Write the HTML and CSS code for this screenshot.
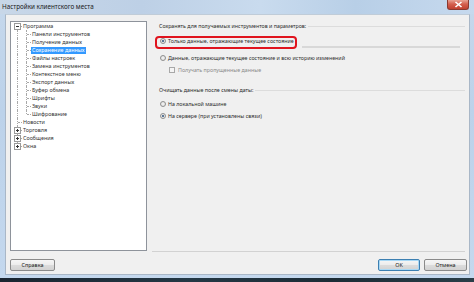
FILE: index.html
```html
<!DOCTYPE html>
<html lang="ru">
<head>
<meta charset="utf-8">
<title>Настройки клиентского места</title>
<link rel="stylesheet" href="styles.css">
</head>
<body>
<div class="window">
  <div class="titlebar">
    <span class="title">Настройки клиентского места</span>
    <span class="close"><svg width="9" height="7" viewBox="0 0 9 7"><path d="M1.5 1 L7.5 6 M7.5 1 L1.5 6" stroke="#fff" stroke-width="1.6"/></svg></span>
  </div>
  <div class="client">
    <div class="main">
      <div class="tree">
        <div class="row"><span class="g first"><svg class="box" width="7" height="7" viewBox="0 0 7 7"><rect x="0.5" y="0.5" width="6" height="6" fill="#fff" stroke="#9a9a9a"/><path d="M2 3.5h3" stroke="#333"/></svg></span><span class="lbl">Программа</span></div>
        <div class="row"><span class="g v"></span><span class="g t"></span><span class="lbl">Панели инструментов</span></div>
        <div class="row"><span class="g v"></span><span class="g t"></span><span class="lbl">Получение данных</span></div>
        <div class="row"><span class="g v"></span><span class="g t"></span><span class="lbl sel">Сохранение данных</span></div>
        <div class="row"><span class="g v"></span><span class="g t"></span><span class="lbl">Файлы настроек</span></div>
        <div class="row"><span class="g v"></span><span class="g t"></span><span class="lbl">Замена инструментов</span></div>
        <div class="row"><span class="g v"></span><span class="g t"></span><span class="lbl">Контекстное меню</span></div>
        <div class="row"><span class="g v"></span><span class="g t"></span><span class="lbl">Экспорт данных</span></div>
        <div class="row"><span class="g v"></span><span class="g t"></span><span class="lbl">Буфер обмена</span></div>
        <div class="row"><span class="g v"></span><span class="g t"></span><span class="lbl">Шрифты</span></div>
        <div class="row"><span class="g v"></span><span class="g t"></span><span class="lbl">Звуки</span></div>
        <div class="row"><span class="g v"></span><span class="g l"></span><span class="lbl">Шифрование</span></div>
        <div class="row"><span class="g t"></span><span class="lbl">Новости</span></div>
        <div class="row"><span class="g t"><svg class="box" width="7" height="7" viewBox="0 0 7 7"><rect x="0.5" y="0.5" width="6" height="6" fill="#fff" stroke="#9a9a9a"/><path d="M2 3.5h3M3.5 2v3" stroke="#333"/></svg></span><span class="lbl">Торговля</span></div>
        <div class="row"><span class="g t"><svg class="box" width="7" height="7" viewBox="0 0 7 7"><rect x="0.5" y="0.5" width="6" height="6" fill="#fff" stroke="#9a9a9a"/><path d="M2 3.5h3M3.5 2v3" stroke="#333"/></svg></span><span class="lbl">Сообщения</span></div>
        <div class="row"><span class="g l"><svg class="box" width="7" height="7" viewBox="0 0 7 7"><rect x="0.5" y="0.5" width="6" height="6" fill="#fff" stroke="#9a9a9a"/><path d="M2 3.5h3M3.5 2v3" stroke="#333"/></svg></span><span class="lbl">Окна</span></div>
      </div>
      <div class="panel">
        <div class="hdr h1"><span>Сохранять для получаемых инструментов и параметров:</span><span class="rule"></span></div>
        <div class="opt o1"><span class="radio on"></span><span>Только данные, отражающие текущее состояние</span><span class="trail"></span><span class="mark"></span></div>
        <div class="opt o2"><span class="radio"></span><span>Данные, отражающие текущее состояние и всю историю изменений</span></div>
        <div class="opt o3"><span class="check"></span><span class="dim">Получать пропущенные данные</span></div>
        <div class="hdr h2"><span>Очищать данные после смены даты:</span><span class="rule"></span></div>
        <div class="opt o4"><span class="radio"></span><span>На локальной машине</span></div>
        <div class="opt o5"><span class="radio on"></span><span>На сервере (при установлены связи)</span></div>
      </div>
    </div>
    <div class="buttons">
      <button class="btn help">Справка</button>
      <span class="spacer"></span>
      <button class="btn ok">OK</button>
      <button class="btn cancel">Отмена</button>
    </div>
  </div>
</div>
<div class="taskbar"></div>
</body>
</html>
```

FILE: styles.css
```css
* { box-sizing: border-box; }
html, body { margin: 0; padding: 0; }
body {
  width: 474px;
  height: 282px;
  overflow: hidden;
  background: #1c2a35;
  font-family: "Noto Sans", "Open Sans", sans-serif;
  font-size: 5.4px;
  color: #2e2e2e;
}
.window {
  height: 278px;
  background: linear-gradient(180deg, #c6d8ec 0%, #bcd2ea 40%, #c4d8ee 100%);
  padding: 0 4px 3px 5px;
  display: flex;
  flex-direction: column;
}
.titlebar {
  height: 14px;
  display: flex;
  align-items: flex-start;
  margin-left: -5px;
  margin-right: -4px;
  padding-left: 2px;
  background: linear-gradient(90deg, #c8d7e8 0%, #bdd0e6 30%, #c9dbee 55%, #b8cfe7 75%, #c6d9ee 100%);
}
.title {
  font-size: 6.3px;
  line-height: 13px;
  color: #1a1a1a;
}
.close {
  margin-left: auto;
  margin-right: 5px;
  width: 22px;
  height: 10px;
  border-radius: 0 0 3px 3px;
  background: linear-gradient(180deg, #e8a394 0%, #d4604f 45%, #c1402f 100%);
  border: 1px solid #8a3a30;
  border-top: none;
  display: flex;
  align-items: center;
  justify-content: center;
}
.client {
  flex: 1;
  background: #f0f0f0;
  border: 1px solid #a9b7c7;
  border-top-color: #c0ccd8;
  padding: 6px 2px 3px 4px;
  display: flex;
  flex-direction: column;
}
.main {
  height: 231px;
  display: flex;
  margin-right: 2px;
}
.tree {
  width: 137px;
  height: 230px;
  background: #fff;
  border: 1px solid #8e939b;
  padding: 0 0 0 2px;
}
.row {
  height: 8px;
  display: flex;
  align-items: center;
  white-space: nowrap;
}
.g {
  flex: none;
  width: 9px;
  height: 8px;
  position: relative;
}
.g::before, .g::after {
  content: "";
  position: absolute;
}
.g.v::before, .g.t::before {
  left: 4px; top: 0; bottom: 0;
  border-left: 1px dotted #a8a8a8;
}
.g.l::before {
  left: 4px; top: 0; height: 4px;
  border-left: 1px dotted #a8a8a8;
}
.g.first::before {
  left: 4px; top: 4px; bottom: 0;
  border-left: 1px dotted #a8a8a8;
}
.g.t::after, .g.l::after, .g.first::after {
  left: 5px; right: 0; top: 4px;
  border-top: 1px dotted #a8a8a8;
}
.box {
  position: absolute;
  left: 1px;
  top: 1px;
  z-index: 1;
}
.lbl {
  padding: 0 1px;
  line-height: 7px;
  color: #333;
}
.lbl.sel {
  background: #3399ff;
  color: #fff;
}
.panel {
  flex: 1;
  margin-left: 5px;
  border-bottom: 1px solid #d2d2d2;
  padding: 1px 0 0 7px;
  display: flex;
  flex-direction: column;
  white-space: nowrap;
  font-size: 5.3px;
}
.hdr {
  height: 8px;
  display: flex;
  align-items: center;
  color: #2a2a2a;
}
.rule {
  flex: 1;
  margin-left: 2px;
  border-top: 1px solid #dcdcdc;
}
.opt {
  height: 8px;
  display: flex;
  align-items: center;
  gap: 2px;
  position: relative;
}
.h1 { margin-bottom: 7px; }
.o1 { margin-bottom: 9px; margin-left: 1px; }
.o2 { margin-bottom: 4px; margin-left: 1px; }
.o3 { margin-bottom: 12px; margin-left: 10px; }
.h2 { margin-bottom: 6px; }
.o4 { margin-bottom: 4px; margin-left: 1px; }
.o5 { margin-left: 1px; }
.radio {
  flex: none;
  width: 6px;
  height: 6px;
  border-radius: 50%;
  border: 1px solid #8f8f8f;
  background: radial-gradient(circle, #f4f4f4 0%, #dedede 100%);
  position: relative;
}
.radio.on::after {
  content: "";
  position: absolute;
  left: 1px; top: 1px;
  width: 2px; height: 2px;
  border-radius: 50%;
  background: #2a4f7a;
}
.check {
  flex: none;
  width: 6px;
  height: 6px;
  border: 1px solid #a8a8a8;
  background: #f4f4f4;
  margin-right: 1px;
}
.dim { color: #8a8a8a; }
.trail {
  flex: none;
  width: 158px;
  height: 2px;
  background: #d8d8d8;
  align-self: flex-end;
  margin-bottom: -3px;
  margin-left: 6px;
}
.mark {
  position: absolute;
  left: -5px;
  top: -1px;
  width: 142px;
  height: 13px;
  border: 2px solid #e0141e;
  border-radius: 4px;
}
.buttons {
  margin-top: 7px;
  height: 12px;
  display: flex;
  gap: 4px;
}
.spacer { flex: 1; }
.btn {
  font-family: inherit;
  font-size: 5.4px;
  color: #222;
  height: 12px;
  padding: 0;
  border: 1px solid #8a8a8a;
  border-radius: 2px;
  background: linear-gradient(180deg, #f6f6f6 0%, #ececec 50%, #dcdcdc 51%, #d2d2d2 100%);
}
.help { width: 45px; }
.ok {
  width: 42px;
  border-color: #3c7fb1;
  box-shadow: inset 0 0 0 1px #a8d8f5;
}
.cancel { width: 43px; }
.taskbar {
  height: 4px;
  background: linear-gradient(90deg, #1a2530 0%, #243845 40%, #1c2c36 70%, #2a3e48 100%);
}
```
